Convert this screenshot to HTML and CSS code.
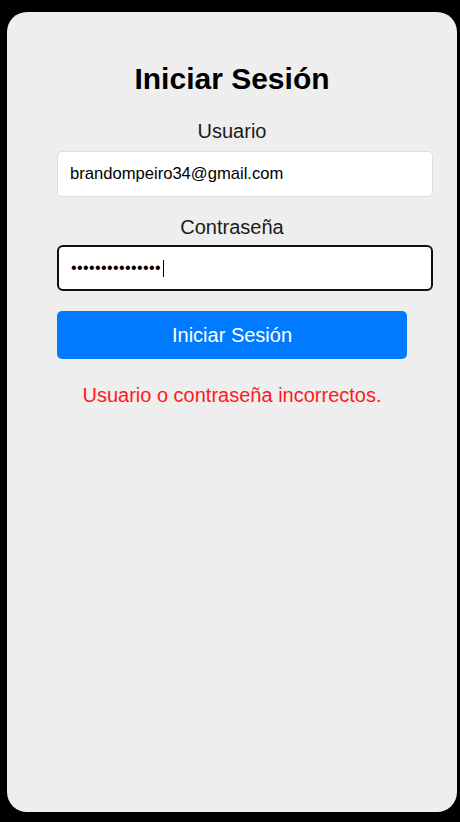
FILE: index.html
```html
<!DOCTYPE html>
<html lang="es">
<head>
  <meta charset="UTF-8" />
  <meta name="viewport" content="width=device-width, initial-scale=1.0" />
  <title>Iniciar Sesión</title>
  <link rel="stylesheet" href="styles.css">
</head>
<body>
  <div class="screen">
    <div class="login">
      <h1>Iniciar Sesión</h1>
      <form id="loginForm">
        <label for="usuario" class="label-user">Usuario</label>
        <input id="usuario" type="text" value="brandompeiro34@gmail.com" />
        <label for="password" class="label-pass">Contraseña</label>
        <div class="input focused">
          <span class="dots">•••••••••••••••</span><span class="caret"></span>
        </div>
        <button type="submit">Iniciar Sesión</button>
      </form>
      <p class="error">Usuario o contraseña incorrectos.</p>
    </div>
  </div>
</body>
</html>
```

FILE: styles.css
```css
body {
  margin: 0;
  padding: 0;
  background: #000;
  font-family: "Liberation Sans", Arial, Helvetica, sans-serif;
  color: #111;
}
.screen {
  margin: 12px 3px 0 7px;
  height: 800px;
  background: #eeeeee;
  border-radius: 20px;
  padding-top: 50px;
  box-sizing: border-box;
}
.login {
  width: 350px;
  margin: 0 auto;
  text-align: center;
}
h1 {
  margin: 0 0 24px;
  font-size: 30px;
  font-weight: bold;
  color: #000;
}
form {
  display: flex;
  flex-direction: column;
}
label {
  display: block;
  font-size: 20px;
  line-height: 23px;
  color: #1a1a1a;
}
.label-user {
  margin-bottom: 8px;
}
.label-pass {
  margin-top: 19px;
  margin-bottom: 6px;
}
form input,
.input {
  width: 376px;
  height: 46px;
  box-sizing: border-box;
  padding: 0 12px;
  font-family: inherit;
  font-size: 16.6px;
  color: #000;
  background: #fff;
  border: 1px solid #dddddd;
  border-radius: 5px;
  text-align: left;
  outline: none;
}
.input {
  display: flex;
  align-items: center;
}
.input.focused {
  border: 2px solid #101010;
  border-radius: 6px;
  padding-left: 12px;
}
.dots {
  font-size: 16px;
  letter-spacing: 0.4px;
  line-height: 1;
}
.caret {
  display: inline-block;
  width: 1px;
  height: 17px;
  margin-left: 2px;
  background: #000;
}
form button {
  margin-top: 20px;
  width: 350px;
  padding: 12px;
  font-family: inherit;
  font-size: 20px;
  line-height: 24px;
  color: #fff;
  background: #007bff;
  border: none;
  border-radius: 5px;
  cursor: pointer;
}
.error {
  margin: 25px 0 0;
  font-size: 20px;
  line-height: 23px;
  color: #ff1a1a;
}
```
